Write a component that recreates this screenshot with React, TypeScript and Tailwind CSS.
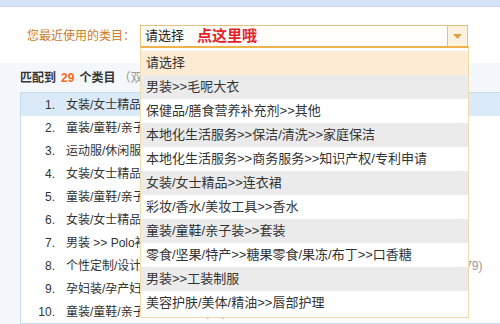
import React from "react";

const options = [
  "请选择",
  "男装>>毛呢大衣",
  "保健品/膳食营养补充剂>>其他",
  "本地化生活服务>>保洁/清洗>>家庭保洁",
  "本地化生活服务>>商务服务>>知识产权/专利申请",
  "女装/女士精品>>连衣裙",
  "彩妆/香水/美妆工具>>香水",
  "童装/童鞋/亲子装>>套装",
  "零食/坚果/特产>>糖果零食/果冻/布丁>>口香糖",
  "男装>>工装制服",
  "美容护肤/美体/精油>>唇部护理",
];

const items = [
  "女装/女士精品 >> 连衣裙 (2315)",
  "童装/童鞋/亲子装 >> 套装 (865)",
  "运动服/休闲服装 >> 运动套装 (412)",
  "女装/女士精品 >> 毛呢外套 (356)",
  "童装/童鞋/亲子装 >> 亲子装 (204)",
  "女装/女士精品 >> 时尚套装 (187)",
  "男装 >> Polo衫 (153)",
  "个性定制/设计服务/DIY >> 服装定制 >> 团体服装定制 >> 工作服/职业工装 (79)",
  "孕妇装/孕产妇用品 >> 孕妇装 (66)",
  "童装/童鞋/亲子装 >> 校服 (41)",
];

export default function App() {
  return (
    <div
      className="relative w-[500px] h-[324px] overflow-hidden bg-[#f4f7fb] text-[#333]"
      style={{ fontFamily: '"Liberation Sans", "Noto Sans CJK SC", sans-serif' }}
    >
      <div className="h-[7px] bg-[#d4e3f7] border-b border-[#c6d8ef]" />
      <div className="h-[56px] bg-white flex items-start pt-[18px]">
        <div className="ml-[27px] w-[113px] h-[22px] flex items-center text-[12px] text-[#cc7a29]">
          您最近使用的类目：
        </div>
        <div className="w-[328px] h-[22px] border border-[#e6c37a] bg-[#fffefb] flex items-center">
          <span className="ml-[4px] text-[13px] text-[#222]">请选择</span>
          <span className="ml-[13px] text-[15px] font-bold text-[#e3242b]">点这里哦</span>
          <div className="ml-auto w-[20px] h-full border-l border-[#e6c37a] bg-[#fbf2df] flex items-center justify-center">
            <svg width="9" height="5" viewBox="0 0 9 5">
              <polygon points="0,0 9,0 4.5,5" fill="#e2a03c" />
            </svg>
          </div>
        </div>
      </div>
      <div className="pl-[20px] pt-[7px]">
        <div className="h-[16px] flex items-center text-[12px] font-bold text-[#333]">
          <span>匹配到</span>
          <span className="ml-[5px] text-[#f06a22]">29</span>
          <span className="ml-[5px]">个类目</span>
          <span className="ml-[3px] font-normal text-[#999]">（双击直接选择）</span>
        </div>
        <div className="mt-[6px] w-[490px] border border-[#c8daee] bg-white">
          {items.map((t, i) => (
            <div
              key={i}
              className={`h-[23px] flex items-center text-[12px] ${i === 0 ? "bg-[#dbeaf8]" : ""}`}
            >
              <span className="w-[34px] text-right">{i + 1}.</span>
              <span className="ml-[11px] whitespace-nowrap">
                {t.replace(/ \(\d+\)$/, "")}
                <span className="text-[#999]">{t.match(/ \(\d+\)$/)?.[0]}</span>
              </span>
            </div>
          ))}
        </div>
      </div>
      <div className="absolute left-[140px] top-[46px] w-[329px] border-t-2 border-t-[#f0b24a] border-x border-x-[#eedcaa] border-b border-b-[#eedcaa] bg-white pt-[3px] pb-[2px]">
        {options.map((o, i) => (
          <div
            key={i}
            className={`h-[24px] flex items-center pl-[5px] text-[13px] text-[#333] whitespace-nowrap ${
              i === 0 ? "bg-[#fdebd3]" : i % 2 === 1 ? "bg-[#ebebeb]" : "bg-white"
            }`}
          >
            {o}
          </div>
        ))}
      </div>
    </div>
  );
}
